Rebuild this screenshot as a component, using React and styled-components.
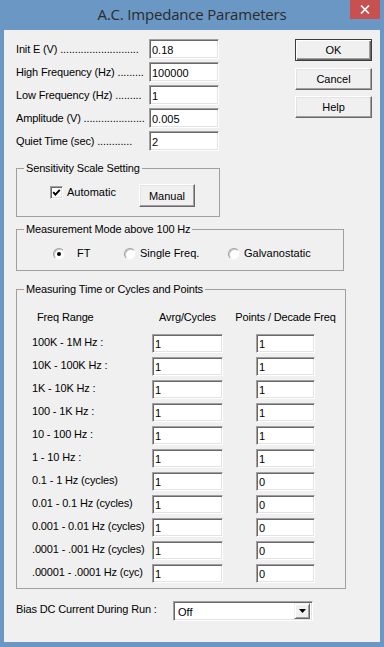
import React from "react";
import styled, { createGlobalStyle } from "styled-components";

const Global = createGlobalStyle`
  html, body { margin: 0; padding: 0; }
  body {
    width: 384px; height: 647px; overflow: hidden;
    background: #6a97c4;
    font-family: "Liberation Sans", Arial, sans-serif;
    font-size: 11px; color: #000;
  }
  #root { height: 100%; }
`;

const Window = styled.div`
  width: 384px; height: 647px; background: #6a97c4;
  display: flex; flex-direction: column; box-sizing: border-box;
`;

const TitleBar = styled.div`
  height: 30px; flex-shrink: 0;
  display: grid; grid-template-columns: 1fr auto 1fr;
`;

const Title = styled.div`
  grid-column: 2;
  font-family: "Open Sans", "Noto Sans", sans-serif;
  font-size: 15px; line-height: 20px; padding-top: 4px;
  color: #2b2b2b; white-space: nowrap; letter-spacing: -0.2px;
`;

const Close = styled.div`
  grid-column: 3; justify-self: end; align-self: start;
  width: 30px; height: 19px; margin-right: 4px;
  background: #c75050;
  display: flex; align-items: center; justify-content: center;
`;

const Client = styled.div`
  flex: 1; margin: 0 4px 5px; background: #f0f0f0;
  padding: 9px 8px 0 12px;
  display: flex; flex-direction: column; align-items: flex-start;
`;

const Top = styled.div`
  width: 100%;
  display: flex; justify-content: space-between; align-items: flex-start;
`;

const Fields = styled.div`
  display: grid; grid-template-columns: 133px 70px;
  row-gap: 3px; align-items: center;
`;

const DotLabel = styled.div`
  white-space: nowrap;
  line-height: 14px; letter-spacing: -0.15px;
`;

const TextBox = styled.input`
  box-sizing: border-box; margin: 0;
  width: ${p => p.$w}px; height: ${p => p.$h}px;
  background: #fff; color: #000;
  border: 1px solid; border-color: #a0a0a0 #fff #fff #a0a0a0;
  box-shadow: inset 1px 1px 0 #696969, inset -1px -1px 0 #e3e3e3;
  padding: 1px 2px 0; outline: none;
  font-family: "Liberation Sans", Arial, sans-serif; font-size: 11px;
`;

const ButtonCol = styled.div`
  width: 77px; display: flex; flex-direction: column;
`;

const Btn = styled.button`
  box-sizing: border-box; margin: ${p => p.$mt || 0}px 0 0;
  width: ${p => p.$w}px; height: ${p => p.$h}px;
  background: #f0f0f0; color: #000; padding: 0;
  font-family: "Liberation Sans", Arial, sans-serif; font-size: 11px;
  border: 1px solid;
  border-color: ${p => (p.$def ? "#3c3c3c" : "#fff #696969 #696969 #fff")};
  box-shadow: ${p =>
    p.$def
      ? "inset 1px 1px 0 #fff, inset -1px -1px 0 #696969, inset -2px -2px 0 #a0a0a0"
      : "inset -1px -1px 0 #a0a0a0, inset 1px 1px 0 #e3e3e3"};
`;

const Group = styled.fieldset`
  box-sizing: border-box; min-width: 0;
  margin: ${p => p.$mt}px 0 0;
  width: ${p => p.$w}px;
  border: 1px solid #a0a0a0;
  padding: ${p => p.$pad};
`;

const Legend = styled.legend`
  padding: 0 2px; margin-left: 7px;
  line-height: 13px; font-size: 11px; letter-spacing: -0.15px;
`;

const SensRow = styled.div`
  display: flex; align-items: flex-start; padding-left: 33px;
`;

const CheckLabel = styled.label`
  width: 89px; display: flex; align-items: center; gap: 4px;
  margin-top: 2px; line-height: 13px;
`;

const CheckBox = styled.span`
  box-sizing: border-box; width: 13px; height: 13px; flex-shrink: 0;
  background: #fff;
  border: 1px solid; border-color: #a0a0a0 #fff #fff #a0a0a0;
  box-shadow: inset 1px 1px 0 #696969, inset -1px -1px 0 #e3e3e3;
  display: flex; align-items: center; justify-content: center;
`;

const RadioRow = styled.div`
  display: grid; grid-template-columns: 71px 104px auto;
  padding-left: 36px; align-items: center;
`;

const RadioItem = styled.label`
  display: flex; align-items: center; line-height: 13px;
`;

const RadioDot = styled.span`
  box-sizing: border-box; width: 12px; height: 12px; border-radius: 50%;
  flex-shrink: 0; position: relative;
  background: #fff;
  border: 1px solid; border-color: #a0a0a0 #f4f4f4 #f4f4f4 #a0a0a0;
  box-shadow: inset 1px 1px 0 #c8c8c8;
  margin-right: ${p => (p.$wide ? 12 : 4)}px;
  &::after {
    content: ""; display: ${p => (p.$on ? "block" : "none")};
    position: absolute; left: 3px; top: 3px; width: 4px; height: 4px;
    border-radius: 50%; background: #000;
  }
`;

const Table = styled.div`
  display: grid;
  grid-template-columns: 120px 71px 33px 59px;
  row-gap: 4px; padding-left: 15px; align-items: center;
`;

const Head = styled.div`
  grid-column: ${p => p.$col};
  justify-self: ${p => (p.$left ? "start" : "center")};
  padding-left: ${p => (p.$left ? 5 : 0)}px;
  white-space: nowrap; line-height: 13px; margin-bottom: 6px;
  letter-spacing: -0.15px;
`;

const RowLabel = styled.div`
  grid-column: 1; white-space: nowrap; line-height: 13px;
  letter-spacing: -0.15px; margin-top: -2px;
`;

const Cell = styled.div`
  grid-column: ${p => p.$col};
  display: flex;
`;

const BiasRow = styled.div`
  display: flex; align-items: center; margin-top: 12px;
`;

const BiasLabel = styled.div`
  width: 157px; white-space: nowrap; letter-spacing: -0.15px; margin-top: -4px;
`;

const Select = styled.div`
  box-sizing: border-box; width: 140px; height: 20px;
  background: #fff;
  border: 1px solid; border-color: #a0a0a0 #fff #fff #a0a0a0;
  box-shadow: inset 1px 1px 0 #696969, inset -1px -1px 0 #e3e3e3;
  display: flex; align-items: center; padding: 2px 2px 2px 4px;
`;

const SelectText = styled.span`
  flex: 1; padding-top: 2px;
`;

const DropBtn = styled.span`
  box-sizing: border-box; width: 16px; height: 16px;
  background: #f0f0f0;
  border: 1px solid; border-color: #f0f0f0 #696969 #696969 #f0f0f0;
  box-shadow: inset 1px 1px 0 #fff, inset -1px -1px 0 #a0a0a0;
  display: flex; align-items: center; justify-content: center;
`;

const topFields = [
  ["Init E (V)", 27, "0.18"],
  ["High Frequency (Hz)", 9, "100000"],
  ["Low Frequency (Hz)", 9, "1"],
  ["Amplitude (V)", 21, "0.005"],
  ["Quiet Time (sec)", 12, "2"],
];

const rows = [
  ["100K - 1M Hz :", "1", "1"],
  ["10K - 100K Hz :", "1", "1"],
  ["1K - 10K Hz :", "1", "1"],
  ["100 - 1K Hz :", "1", "1"],
  ["10 - 100 Hz :", "1", "1"],
  ["1 - 10 Hz :", "1", "1"],
  ["0.1 - 1 Hz (cycles)", "1", "0"],
  ["0.01 - 0.1 Hz (cycles)", "1", "0"],
  ["0.001 - 0.01 Hz (cycles)", "1", "0"],
  [".0001 - .001 Hz (cycles)", "1", "0"],
  [".00001 - .0001 Hz (cyc)", "1", "0"],
];

export default function App() {
  return (
    <>
      <Global />
      <Window>
        <TitleBar>
          <Title>A.C. Impedance Parameters</Title>
          <Close>
            <svg width="10" height="9" viewBox="0 0 10 9">
              <path d="M1 0.5 L9 8.5 M9 0.5 L1 8.5" stroke="#fff" strokeWidth="1.7" />
            </svg>
          </Close>
        </TitleBar>
        <Client>
          <Top>
            <Fields>
              {topFields.map(([l, n, v]) => (
                <React.Fragment key={l}>
                  <DotLabel>{l} {".".repeat(n)}</DotLabel>
                  <TextBox $w={70} $h={20} defaultValue={v} readOnly />
                </React.Fragment>
              ))}
            </Fields>
            <ButtonCol>
              <Btn $w={77} $h={22} $def>OK</Btn>
              <Btn $w={77} $h={22} $mt={7}>Cancel</Btn>
              <Btn $w={77} $h={22} $mt={6}>Help</Btn>
            </ButtonCol>
          </Top>

          <Group $mt={11} $w={204} $pad="9px 0 9px">
            <Legend>Sensitivity Scale Setting</Legend>
            <SensRow>
              <CheckLabel>
                <CheckBox>
                  <svg width="9" height="9" viewBox="0 0 9 9">
                    <polyline points="1.2,4.2 3.4,6.6 7.8,1.8" fill="none" stroke="#000" strokeWidth="1.9" />
                  </svg>
                </CheckBox>
                Automatic
              </CheckLabel>
              <Btn $w={56} $h={23}>Manual</Btn>
            </SensRow>
          </Group>

          <Group $mt={6} $w={328} $pad="11px 0 10px">
            <Legend>Measurement Mode above 100 Hz</Legend>
            <RadioRow>
              <RadioItem><RadioDot $on $wide />FT</RadioItem>
              <RadioItem><RadioDot />Single Freq.</RadioItem>
              <RadioItem><RadioDot />Galvanostatic</RadioItem>
            </RadioRow>
          </Group>

          <Group $mt={12} $w={330} $pad="15px 0 5px">
            <Legend>Measuring Time or Cycles and Points</Legend>
            <Table>
              <Head $col={1} $left>Freq Range</Head>
              <Head $col={2}>Avrg/Cycles</Head>
              <Head $col={4}>Points / Decade Freq</Head>
              {rows.map(([l, a, p]) => (
                <React.Fragment key={l}>
                  <RowLabel>{l}</RowLabel>
                  <Cell $col={2}><TextBox $w={71} $h={19} defaultValue={a} readOnly /></Cell>
                  <Cell $col={4}><TextBox $w={59} $h={19} defaultValue={p} readOnly /></Cell>
                </React.Fragment>
              ))}
            </Table>
          </Group>

          <BiasRow>
            <BiasLabel>Bias DC Current During Run :</BiasLabel>
            <Select>
              <SelectText>Off</SelectText>
              <DropBtn>
                <svg width="7" height="4" viewBox="0 0 7 4">
                  <path d="M0 0 H7 L3.5 4 Z" fill="#000" />
                </svg>
              </DropBtn>
            </Select>
          </BiasRow>
        </Client>
      </Window>
    </>
  );
}
